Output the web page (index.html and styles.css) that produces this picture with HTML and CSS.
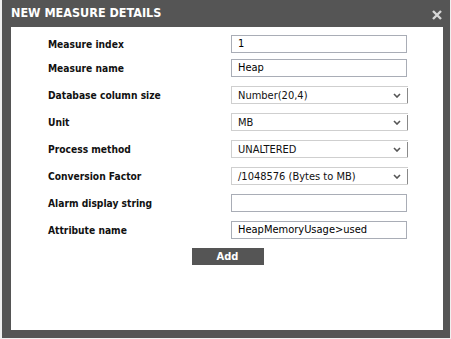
FILE: index.html
```html
<!DOCTYPE html>
<html lang="en">
<head>
  <meta charset="UTF-8">
  <title>New Measure Details</title>
  <link rel="stylesheet" href="styles.css">
</head>
<body>
  <div class="dialog">
    <div class="dialog-header">
      <span class="dialog-title">NEW MEASURE DETAILS</span>
      <svg class="close" width="10" height="10" viewBox="0 0 10 10">
        <path d="M1 1L9 9M9 1L1 9" stroke="#d8d8d8" stroke-width="2.4" fill="none"/>
      </svg>
    </div>
    <div class="dialog-body">
      <div class="form">
        <div class="row">
          <label>Measure index</label>
          <div class="input">1</div>
        </div>
        <div class="row tight">
          <label>Measure name</label>
          <div class="input">Heap</div>
        </div>
        <div class="row">
          <label>Database column size</label>
          <div class="select"><span class="value">Number(20,4)</span><svg class="chev" width="8" height="5" viewBox="0 0 8 5"><path d="M1 1L4 4L7 1" stroke="#555" stroke-width="1.6" fill="none"/></svg><span class="bar"></span></div>
        </div>
        <div class="row">
          <label>Unit</label>
          <div class="select"><span class="value">MB</span><svg class="chev" width="8" height="5" viewBox="0 0 8 5"><path d="M1 1L4 4L7 1" stroke="#555" stroke-width="1.6" fill="none"/></svg><span class="bar"></span></div>
        </div>
        <div class="row wide">
          <label>Process method</label>
          <div class="select"><span class="value">UNALTERED</span><svg class="chev" width="8" height="5" viewBox="0 0 8 5"><path d="M1 1L4 4L7 1" stroke="#555" stroke-width="1.6" fill="none"/></svg><span class="bar"></span></div>
        </div>
        <div class="row">
          <label>Conversion Factor</label>
          <div class="select"><span class="value">/1048576 (Bytes to MB)</span><svg class="chev" width="8" height="5" viewBox="0 0 8 5"><path d="M1 1L4 4L7 1" stroke="#555" stroke-width="1.6" fill="none"/></svg><span class="bar"></span></div>
        </div>
        <div class="row wide">
          <label>Alarm display string</label>
          <div class="input"></div>
        </div>
        <div class="row">
          <label>Attribute name</label>
          <div class="input">HeapMemoryUsage&gt;used</div>
        </div>
      </div>
      <div class="actions">
        <button class="add-button">Add</button>
      </div>
    </div>
  </div>
</body>
</html>
```

FILE: styles.css
```css
body {
  margin: 0;
  background-color: #f0f0f0;
  font-family: "DejaVu Sans Condensed", "DejaVu Sans", sans-serif;
}
.dialog {
  width: 448px;
  height: 338px;
  margin-left: 2px;
  background-color: #555;
  display: flex;
  flex-direction: column;
}
.dialog-header {
  height: 27px;
  display: flex;
  align-items: center;
  justify-content: space-between;
  padding: 0 8px 0 9px;
}
.dialog-title {
  color: #fff;
  font-weight: bold;
  font-size: 12.5px;
  margin-top: -2px;
}
.close {
  margin-top: 3px;
}
.dialog-body {
  background-color: #fff;
  margin: 0 7px 8px 9px;
  flex: 1;
}
.form {
  padding: 8px 0 0 37px;
}
.row {
  display: flex;
  align-items: center;
  height: 18px;
  margin-bottom: 9px;
}
.row.tight {
  margin-top: -3px;
}
.row.wide {
  margin-top: 2px;
}
.row label {
  width: 183px;
  font-size: 10.2px;
  font-weight: bold;
  color: #111;
}
.input {
  width: 176px;
  height: 18px;
  border: 1px solid #a9adb6;
  font-size: 11px;
  line-height: 16px;
  padding-left: 6px;
  color: #000;
  box-sizing: border-box;
}
.select {
  width: 177px;
  height: 18px;
  border: 1px solid #cfcfcf;
  border-right: none;
  box-sizing: border-box;
  display: flex;
  align-items: center;
  font-size: 11px;
  color: #111;
}
.select .value {
  flex: 1;
  padding-left: 6px;
}
.select .chev {
  margin-right: 6px;
}
.select .bar {
  width: 1px;
  height: 15px;
  background-color: #8a8a8a;
}
.actions {
  display: flex;
  justify-content: center;
  margin-top: 1px;
}
.add-button {
  width: 72px;
  height: 17px;
  border: none;
  background-color: #555;
  color: #fff;
  font-family: "DejaVu Sans Condensed", "DejaVu Sans", sans-serif;
  font-weight: bold;
  font-size: 11px;
  padding: 0;
  margin-left: 1px;
}
```
